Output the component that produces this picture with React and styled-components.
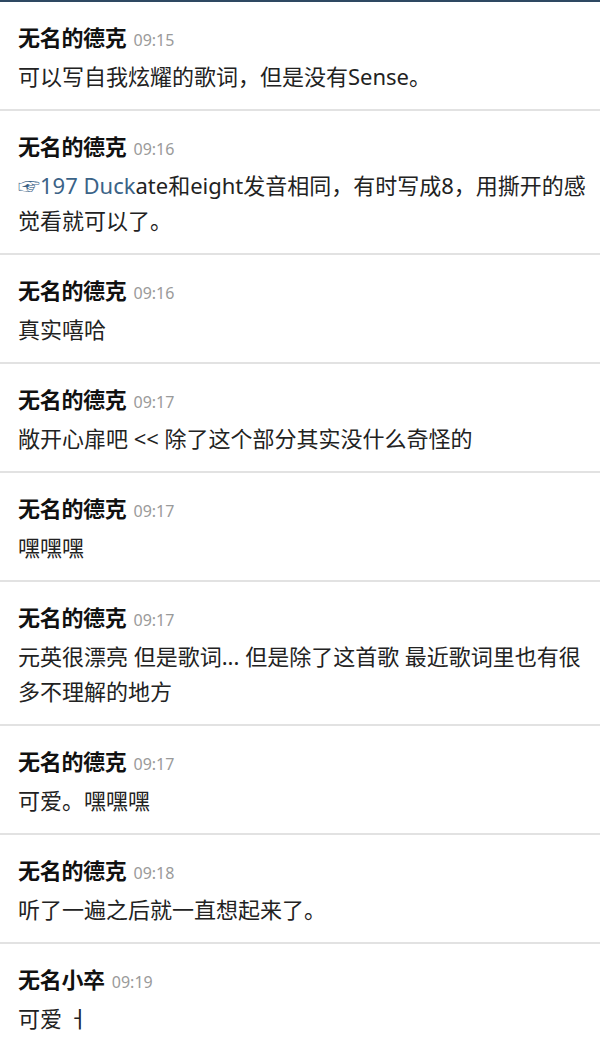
import React from "react";
import styled, { createGlobalStyle } from "styled-components";

const GlobalStyle = createGlobalStyle`
  html, body {
    margin: 0;
    padding: 0;
    background: #ffffff;
  }
  body {
    font-family: "Noto Sans", "Noto Sans CJK SC", sans-serif;
    -webkit-font-smoothing: antialiased;
  }
`;

const messages = [
  { name: "无名的德克", time: "09:15", text: "可以写自我炫耀的歌词，但是没有Sense。" },
  {
    name: "无名的德克",
    time: "09:16",
    link: "☞197 Duck",
    text: "ate和eight发音相同，有时写成8，用撕开的感觉看就可以了。",
  },
  { name: "无名的德克", time: "09:16", text: "真实嘻哈" },
  { name: "无名的德克", time: "09:17", text: "敞开心扉吧 << 除了这个部分其实没什么奇怪的" },
  { name: "无名的德克", time: "09:17", text: "嘿嘿嘿" },
  {
    name: "无名的德克",
    time: "09:17",
    text: "元英很漂亮 但是歌词... 但是除了这首歌 最近歌词里也有很多不理解的地方",
  },
  { name: "无名的德克", time: "09:17", text: "可爱。嘿嘿嘿" },
  { name: "无名的德克", time: "09:18", text: "听了一遍之后就一直想起来了。" },
  { name: "无名小卒", time: "09:19", text: "可爱 ㅓ", last: true },
];

const Feed = () => {
  return (
    <Page>
      <GlobalStyle />
      <List>
        {messages.map((m, i) => (
          <Item key={i} $last={m.last}>
            <Header>
              <Name>{m.name}</Name>
              <Time>{m.time}</Time>
            </Header>
            <Body>
              {m.link && <Link>{m.link}</Link>}
              {m.text}
            </Body>
          </Item>
        ))}
      </List>
    </Page>
  );
};

export default Feed;

const Page = styled.div`
  width: 600px;
  min-height: 1048px;
  border-top: 2px solid #2e4862;
  box-sizing: border-box;
  background: #fff;
`;

const List = styled.div`
  display: flex;
  flex-direction: column;
`;

const Item = styled.div`
  display: flex;
  flex-direction: column;
  gap: 7px;
  padding: 20px 12px 15px 18px;
  border-bottom: ${(p) => (p.$last ? "none" : "2px solid #e2e2e2")};
`;

const Header = styled.div`
  display: flex;
  align-items: baseline;
  gap: 7px;
  height: 30px;
  line-height: 30px;
`;

const Name = styled.span`
  font-size: 22px;
  font-weight: 700;
  color: #111;
  letter-spacing: -0.3px;
`;

const Time = styled.span`
  font-size: 16px;
  color: #9a9a9a;
`;

const Body = styled.div`
  font-size: 22px;
  line-height: 35px;
  color: #222;
  word-break: break-all;
`;

const Link = styled.span`
  color: #3b6387;
`;
